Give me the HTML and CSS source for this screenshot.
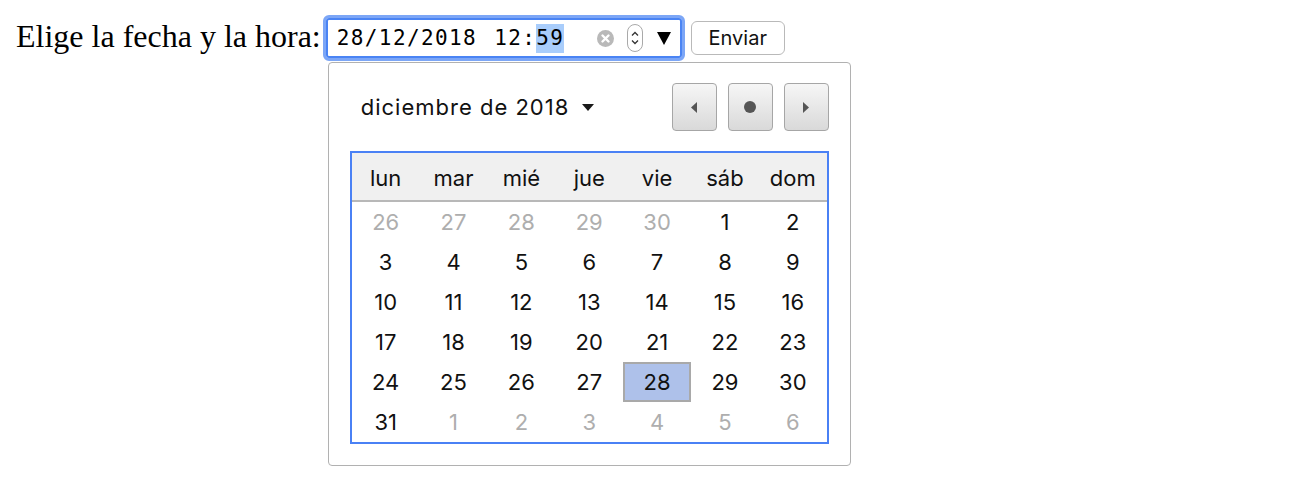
FILE: index.html
```html
<!DOCTYPE html>
<html lang="es">
<head>
<meta charset="utf-8">
<title>Elige la fecha y la hora</title>
<link rel="stylesheet" href="styles.css">
</head>
<body>
<div class="page">
  <div class="form">
    <span class="label">Elige la fecha y la hora:</span>
    <div class="field">
      <div class="ring">
        <div class="dt">
          <span class="value">28/12/2018<span class="gap"></span>12:<span class="hl">59</span></span>
          <svg class="clear" width="17" height="17" viewBox="0 0 17 17"><circle cx="8.5" cy="8.5" r="8.5" fill="#b9b9b9"/><path d="M5.5 5.5 L11.5 11.5 M11.5 5.5 L5.5 11.5" stroke="#fff" stroke-width="2.4" stroke-linecap="round"/></svg>
          <svg class="spin" width="16" height="28" viewBox="0 0 16 28"><rect x="0.5" y="0.5" width="15" height="27" rx="7.5" fill="#fff" stroke="#a9a9a9"/><path d="M5 11.5 L8 8.5 L11 11.5 M5 16.5 L8 19.5 L11 16.5" fill="none" stroke="#333" stroke-width="1.3"/></svg>
          <svg class="drop" width="14" height="13" viewBox="0 0 14 13"><polygon points="0,0 14,0 7,13" fill="#000"/></svg>
        </div>
      </div>
      <div class="popup">
        <div class="head">
          <div class="month">diciembre de 2018<svg class="caret" width="12" height="7" viewBox="0 0 12 7"><polygon points="0,0 12,0 6,7" fill="#1a1a1a"/></svg></div>
          <div class="navs">
            <div class="nav"><svg width="6" height="11" viewBox="0 0 6 11"><polygon points="6,0 6,11 0,5.5" fill="#555"/></svg></div>
            <div class="nav"><svg width="12" height="12" viewBox="0 0 12 12"><circle cx="6" cy="6" r="6" fill="#555"/></svg></div>
            <div class="nav"><svg width="6" height="11" viewBox="0 0 6 11"><polygon points="0,0 0,11 6,5.5" fill="#555"/></svg></div>
          </div>
        </div>
        <div class="cal">
          <div class="cal-head">
            <span>lun</span><span>mar</span><span>mié</span><span>jue</span><span>vie</span><span>sáb</span><span>dom</span>
          </div>
          <div class="days">
            <span class="other">26</span><span class="other">27</span><span class="other">28</span><span class="other">29</span><span class="other">30</span><span>1</span><span>2</span>
            <span>3</span><span>4</span><span>5</span><span>6</span><span>7</span><span>8</span><span>9</span>
            <span>10</span><span>11</span><span>12</span><span>13</span><span>14</span><span>15</span><span>16</span>
            <span>17</span><span>18</span><span>19</span><span>20</span><span>21</span><span>22</span><span>23</span>
            <span>24</span><span>25</span><span>26</span><span>27</span><span class="selected">28</span><span>29</span><span>30</span>
            <span>31</span><span class="other">1</span><span class="other">2</span><span class="other">3</span><span class="other">4</span><span class="other">5</span><span class="other">6</span>
          </div>
        </div>
      </div>
    </div>
    <button class="submit" type="button">Enviar</button>
  </div>
</div>
</body>
</html>
```

FILE: styles.css
```css
html, body {
  margin: 0;
  background: #fff;
}
body {
  font-family: "Liberation Serif", serif;
}
.page {
  padding: 15px 0 0 16px;
}
.form {
  display: flex;
  align-items: flex-start;
}
.label {
  margin-top: 3px;
  font-size: 32px;
  line-height: 36px;
  color: #000;
  white-space: nowrap;
}
.field {
  margin-left: 2px;
  width: 362px;
  display: flex;
  flex-direction: column;
  align-items: flex-start;
  flex-shrink: 0;
}
.ring {
  border: 3px solid #7ca6f6;
  border-radius: 6px;
}
.dt {
  width: 356px;
  height: 40px;
  box-sizing: border-box;
  border: 2px solid #4a84f4;
  border-radius: 3px;
  background: #fff;
  display: flex;
  align-items: center;
  padding: 0 9px 0 9px;
}
.value {
  font-family: "DejaVu Sans Mono", monospace;
  font-size: 21px;
  letter-spacing: 1.4px;
  white-space: pre;
  color: #000;
  display: flex;
  align-items: center;
  flex-shrink: 0;
}
.gap {
  display: inline-block;
  width: 17px;
}
.hl {
  display: inline-block;
  background: #a9cdfb;
  line-height: 29px;
  height: 29px;
}
.clear, .spin, .drop {
  display: block;
  flex-shrink: 0;
}
.clear {
  margin-left: auto;
}
.spin {
  margin-left: 13px;
}
.drop {
  margin-left: 14px;
}
.submit {
  margin-left: 6px;
  margin-top: 6px;
  width: 94px;
  height: 34px;
  box-sizing: border-box;
  border: 1px solid #b9b9b9;
  border-radius: 6px;
  background: #fff;
  font-family: Inter, "Liberation Sans", sans-serif;
  font-size: 20px;
  color: #111;
  padding: 0;
  flex-shrink: 0;
}
.popup {
  margin: 1px 0 0 5px;
  width: 523px;
  flex-shrink: 0;
  box-sizing: border-box;
  border: 1px solid #b1b1b1;
  border-radius: 4px;
  background: #fff;
  padding: 20px 21px 21px 21px;
  font-family: Inter, "Liberation Sans", sans-serif;
  color: #111;
}
.head {
  display: flex;
  align-items: center;
  height: 48px;
  margin-bottom: 20px;
}
.month {
  margin-left: 11px;
  font-size: 22px;
  letter-spacing: 1px;
  display: flex;
  align-items: center;
}
.caret {
  margin-left: 13px;
  display: block;
}
.navs {
  margin-left: auto;
  display: flex;
  gap: 11px;
}
.nav {
  width: 45px;
  height: 48px;
  box-sizing: border-box;
  border: 1px solid #a6a6a6;
  border-radius: 4px;
  background: linear-gradient(#f6f6f6, #d9d9d9);
  display: flex;
  align-items: center;
  justify-content: center;
}
.cal {
  width: 479px;
  box-sizing: border-box;
  border: 2px solid #4a81f5;
}
.cal-head {
  display: grid;
  grid-template-columns: repeat(7, 1fr);
  height: 49px;
  box-sizing: border-box;
  padding-top: 3px;
  align-items: center;
  justify-items: center;
  background: #f0f0f0;
  border-bottom: 2px solid #b8b8b8;
  font-size: 22px;
}
.days {
  display: grid;
  grid-template-columns: repeat(7, 1fr);
  grid-auto-rows: 40px;
  font-size: 22px;
}
.days span {
  display: flex;
  align-items: center;
  justify-content: center;
}
.days .other {
  color: #aeaeae;
}
.days .selected {
  background: #aec1ea;
  box-shadow: inset 0 0 0 2px #a9a9a9;
}
```
